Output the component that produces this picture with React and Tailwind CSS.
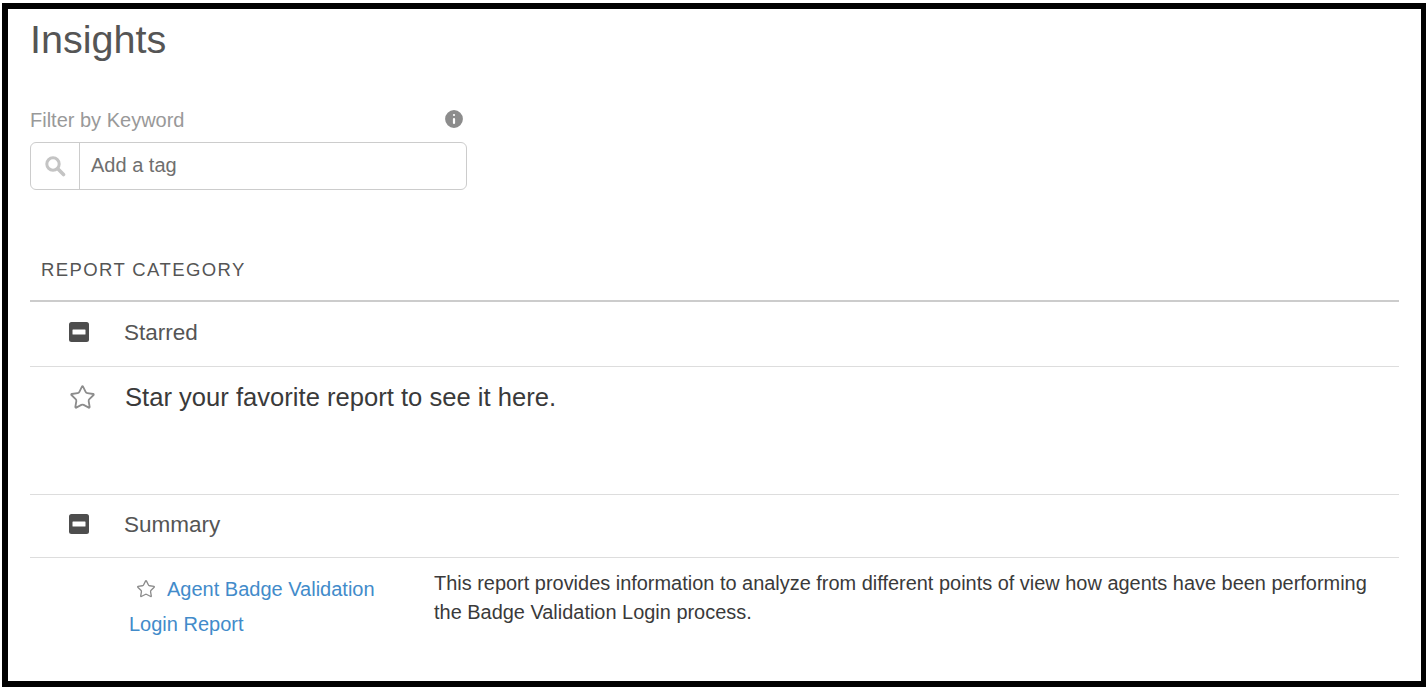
import React from "react";
import { Info, Star } from "lucide-react";

const MinusBox = () => (
    <svg width="20" height="20" viewBox="0 0 20 20" className="mb-[5px] block">
        <rect width="20" height="20" rx="2.5" fill="#4d4d4d" />
        <rect x="3.5" y="7.5" width="13" height="5" rx="0.5" fill="#fff" />
    </svg>
);

const SearchGlyph = () => (
    <svg width="22" height="22" viewBox="0 0 22 22" fill="none" stroke="#c4c4c4" className="block">
        <circle cx="9" cy="9" r="6.2" strokeWidth="3" />
        <path d="M13.8 13.8 L19.5 19.5" strokeWidth="3.6" strokeLinecap="round" />
    </svg>
);

const CategoryHeader = ({ title, className }) => (
    <div className={`flex items-center border-b border-[#dddddd] pl-[39px] ${className}`}>
        <MinusBox />
        <span className="mb-[2px] ml-[35px] text-[22.5px] text-[#555555]">{title}</span>
    </div>
);

export default function App() {
    return (
        <div className="h-[687px] w-[1426px] overflow-hidden bg-white pl-[2px] pt-[3px] font-['Liberation_Sans',Arial,sans-serif]">
            <div className="h-[684px] w-[1424px] border-[6px] border-r-[5px] border-black bg-white pl-[22px] pr-[22px]">
                <h1 className="h-[61px] pt-[3px] text-[39.6px] leading-[54px] font-normal text-[#555555]">Insights</h1>

                <div className="w-[437px]">
                    <div className="mt-[34px] flex h-[38px] items-center justify-between">
                        <label className="mb-[6px] text-[20px] text-[#999999]">Filter by Keyword</label>
                        <Info className="mb-[9px] mr-[1px] h-[24px] w-[24px] fill-[#8c8c8c] text-white" strokeWidth={2.2} />
                    </div>
                    <div className="flex h-[48px] items-center rounded-[6px] border border-[#cccccc]">
                        <div className="flex h-full w-[49px] items-center justify-center border-r border-[#cccccc]">
                            <SearchGlyph />
                        </div>
                        <span className="mb-[2px] pl-[11px] text-[20px] text-[#6f6f6f]">Add a tag</span>
                    </div>
                </div>

                <div className="mt-[68px] border-b-2 border-[#cccccc] pb-[18px] pl-[11px] text-[18.5px] leading-[24px] tracking-[1.4px] text-[#555555]">
                    REPORT CATEGORY
                </div>

                <CategoryHeader title="Starred" className="h-[65px]" />

                <div className="flex h-[128px] items-start border-b border-[#dddddd] pl-[39px] pt-[17px]">
                    <Star className="h-[27px] w-[27px] text-[#8c8c8c]" strokeWidth={1.6} />
                    <span className="ml-[29px] text-[25.6px] leading-[27px] text-[#3a3a3a]">Star your favorite report to see it here.</span>
                </div>

                <CategoryHeader title="Summary" className="h-[63px]" />

                <div className="flex pt-[11px]">
                    <div className="ml-[99px] w-[305px] pr-[50px] pt-[3px] text-[20px] leading-[35px] text-[#428bca]">
                        <Star className="ml-[7px] mr-[11px] mb-[4px] inline-block h-[20px] w-[20px] text-[#8c8c8c]" strokeWidth={1.6} />
                        <a>Agent Badge Validation Login Report</a>
                    </div>
                    <p className="w-[950px] text-[19.95px] leading-[29px] text-[#3a3a3a]">
                        This report provides information to analyze from different points of view how agents have been performing the Badge Validation Login process.
                    </p>
                </div>
            </div>
        </div>
    );
}
